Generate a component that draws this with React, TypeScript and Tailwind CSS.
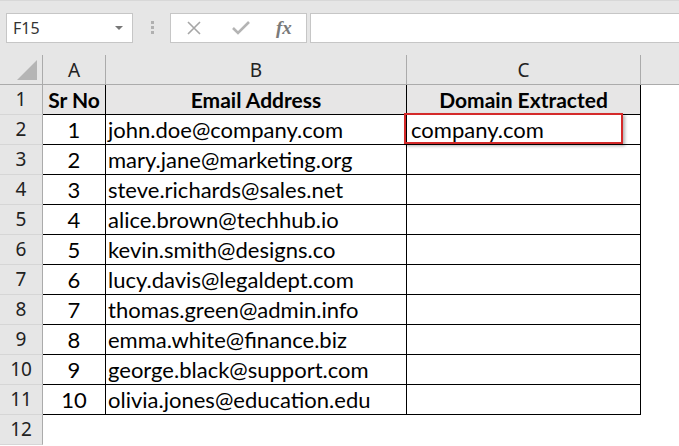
import React from "react";

const rows = [
  ["1", "john.doe@company.com"],
  ["2", "mary.jane@marketing.org"],
  ["3", "steve.richards@sales.net"],
  ["4", "alice.brown@techhub.io"],
  ["5", "kevin.smith@designs.co"],
  ["6", "lucy.davis@legaldept.com"],
  ["7", "thomas.green@admin.info"],
  ["8", "emma.white@finance.biz"],
  ["9", "george.black@support.com"],
  ["10", "olivia.jones@education.edu"],
];

const cellFont = { fontFamily: "Lato, 'Open Sans', sans-serif" };
const uiFont = { fontFamily: "'Noto Sans', 'Open Sans', sans-serif" };

function RowHead({ n }: { n: number }) {
  return (
    <div
      className="flex h-[30px] items-center justify-center border-b border-r border-b-[#d6d6d6] border-r-[#ababab] bg-[#e6e6e6] text-[19px] text-[#222]"
      style={uiFont}
    >
      {n}
    </div>
  );
}

function Toolbar() {
  return (
    <div className="flex h-[55px] items-start border-t border-[#d8d8d8] bg-[#e6e6e6] pt-[12px]">
      <div className="ml-[6px] flex h-[30px] w-[127px] items-center justify-between border border-[#c6c6c6] bg-white pl-[6px] pr-[9px]">
        <span className="text-[16px] text-[#333]" style={uiFont}>
          F15
        </span>
        <span className="h-0 w-0 border-x-[4px] border-t-[4px] border-x-transparent border-t-[#777]" />
      </div>
      <div className="ml-[18px] mt-[8px] flex flex-col gap-[2px]">
        <span className="h-[3px] w-[3px] bg-[#b0b0b0]" />
        <span className="h-[3px] w-[3px] bg-[#b0b0b0]" />
        <span className="h-[3px] w-[3px] bg-[#b0b0b0]" />
      </div>
      <div className="ml-[16px] flex h-[30px] w-[137px] items-center border border-[#c6c6c6] bg-white">
        <svg width="14" height="14" viewBox="0 0 14 14" className="ml-[16px]">
          <path d="M1 1L13 13M13 1L1 13" stroke="#a6a6a6" strokeWidth="1.6" fill="none" />
        </svg>
        <svg width="18" height="14" viewBox="0 0 18 14" className="ml-[31px]">
          <path d="M1 7L6 12L17 1" stroke="#b4b4b4" strokeWidth="2.6" fill="none" />
        </svg>
        <span
          className="ml-[26px] text-[19px] font-bold italic text-[#7a7a7a]"
          style={{ fontFamily: "'Liberation Serif', 'DejaVu Serif', serif" }}
        >
          fx
        </span>
      </div>
      <div className="ml-[3px] h-[30px] flex-1 border border-r-0 border-[#c6c6c6] bg-white" />
    </div>
  );
}

export default function App() {
  return (
    <div className="h-[446px] w-[679px] overflow-hidden bg-white">
      <Toolbar />
      <div className="relative grid grid-cols-[43px_63px_301px_234px_1fr]">
        {/* column headers */}
        <div className="relative h-[30px] border-b border-r border-[#ababab] bg-[#e6e6e6]">
          <svg width="22" height="22" viewBox="0 0 22 22" className="absolute bottom-[3px] right-[4px]">
            <path d="M21 1L21 21L1 21Z" fill="#b5b5b5" />
          </svg>
        </div>
        {["A", "B", "C"].map((c) => (
          <div
            key={c}
            className="flex h-[30px] items-center justify-center border-b border-r border-[#ababab] bg-[#e6e6e6] pt-[2px] text-[19px] text-[#222]"
            style={uiFont}
          >
            {c}
          </div>
        ))}
        <div className="h-[30px] border-b border-[#ababab] bg-[#e6e6e6]" />

        {/* row 1 */}
        <RowHead n={1} />
        {["Sr No", "Email Address", "Domain Extracted"].map((h) => (
          <div
            key={h}
            className="flex h-[30px] items-center justify-center whitespace-nowrap border-b border-r border-black bg-[#e7e6e6] text-[21px] font-bold text-black"
            style={cellFont}
          >
            {h}
          </div>
        ))}
        <div />

        {rows.map(([n, email], i) => (
          <React.Fragment key={n}>
            <RowHead n={i + 2} />
            <div
              className="flex h-[30px] items-center justify-center border-b border-r border-black text-[22px] text-black"
              style={cellFont}
            >
              {n}
            </div>
            <div
              className="flex h-[30px] items-center whitespace-nowrap border-b border-r border-black pl-[2px] text-[22px] text-black"
              style={cellFont}
            >
              {email}
            </div>
            <div
              className="flex h-[30px] items-center border-b border-r border-black pl-[4px] text-[22px] text-black"
              style={cellFont}
            >
              {i === 0 ? "company.com" : ""}
            </div>
            <div />
          </React.Fragment>
        ))}

        <RowHead n={12} />
        <div className="col-span-4" />

        <div className="pointer-events-none absolute left-[404px] top-[58px] h-[31px] w-[219px] border-2 border-[#d42a2a] shadow-[2px_2px_3px_rgba(0,0,0,0.3)]" />
      </div>
    </div>
  );
}
